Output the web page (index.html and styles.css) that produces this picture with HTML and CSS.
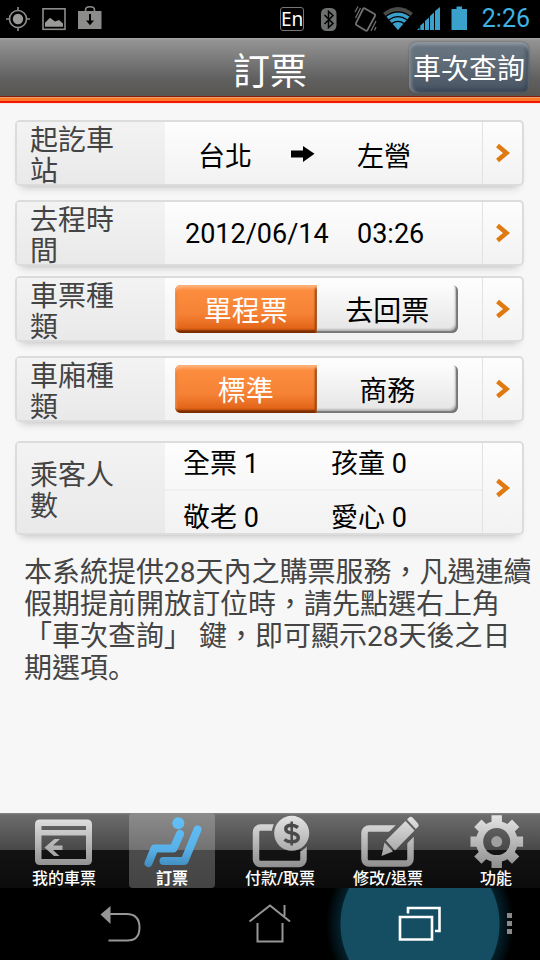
FILE: index.html
```html
<!DOCTYPE html>
<html lang="zh-Hant">
<head>
<meta charset="utf-8">
<meta name="viewport" content="width=device-width, initial-scale=1">
<title>訂票</title>
<link rel="stylesheet" href="styles.css">
</head>
<body>
<div class="status">
  <svg class="status-left" width="110" height="38" viewBox="0 0 110 38" aria-hidden="true">
    <g fill="none" stroke="#8c8c8a" stroke-width="1.6">
      <circle cx="18" cy="19" r="8.5"/>
      <path d="M18 7v4M18 27v4M6 19h4M26 19h4"/>
      <rect x="43" y="8.800" width="22" height="20.500"/>
      <path d="M85.500 12v-2q0-3.200 4.500-3.200t4.500 3.200v2"/>
    </g>
    <circle cx="18" cy="19" r="5.200" fill="#9a9a98"/>
    <path fill="#9a9a98" d="M45 26.800v-4l5-5 5 3.800 4-1.500 4 3.500v3.200z"/>
    <path fill="#8c8c8a" d="M78 11h23.500v18H78z"/>
    <path fill="#000" d="M89 14h2v6.500h3l-4 4.800-4-4.800h3z"/>
  </svg>
  <div class="status-right">
    <span class="lang">En</span>
    <svg width="166" height="38" viewBox="310 0 166 38" aria-hidden="true">
      <rect x="321" y="8" width="15.500" height="23" rx="5.500" fill="#6c706e"/>
      <path d="M324.500 15l8.500 8.500-4.500 4V11.500l4.500 4-8.500 8.500" fill="none" stroke="#000" stroke-width="1.500"/>
      <g fill="none" stroke="#70706e" stroke-width="1.300">
        <path d="M365 8.500l9.500 5.500q1 .8.500 2l-7.500 14q-.8 1.200-2 .5l-9-5.500q-1-.8-.5-2l7-14q.8-1.200 2-.5z" stroke-width="1.800"/>
        <path d="M355.500 18l5-10M355 12l3-5.500M371 31l5-10M374.500 30.500l1.500-3.500"/>
      </g>
      <path fill="#4a4a48" d="M383 13q15-12 30 0l-15 17z"/>
      <path fill="#3aa0cc" d="M386.500 16.500q11.500-8 23 0L398 30z"/>
      <g fill="none" stroke="#000" stroke-width="1.300">
        <path d="M386 16.200q12-8.500 24 0M389 19.800q9-6.200 18 0M392 23.400q6-4 12 0"/>
      </g>
      <path fill="#3aa0cc" d="M417 30l2.500-2.500V30zM420.300 30v-4.500l3.700-3V30zM425 30v-9l4-3.500V30zM430 30V16l4-3.500V30zM435 30V11l5-4v23z"/>
      <path fill="#3aa0cc" d="M456.500 6.500h5.500V9h5v21h-15.500V9h5z"/>
    </svg>
    <time class="clock">2:26</time>
  </div>
</div>

<header class="header">
  <h1 class="title">訂票</h1>
  <button class="query" type="button">車次查詢</button>
</header>
<div class="stripe"></div>

<main class="main">
  <div class="group">
    <section class="card">
      <h2 class="label">起訖車站</h2>
      <div class="value pair route">
        <span class="from">台北
          <svg width="26" height="18" viewBox="0 0 26 18" aria-hidden="true"><path d="M1 5.500h12V1l11.500 7.800L13 17v-4.500H1z"/></svg>
        </span>
        <span>左營</span>
      </div>
      <button class="more" type="button" aria-label="選擇車站"><svg width="16" height="20" viewBox="0 0 16 20"><path d="M2.500 2.500l9 7.500-9 7.500"/></svg></button>
    </section>
    <section class="card">
      <h2 class="label">去程時間</h2>
      <div class="value pair"><span>2012/06/14</span><span>03:26</span></div>
      <button class="more" type="button" aria-label="選擇時間"><svg width="16" height="20" viewBox="0 0 16 20"><path d="M2.500 2.500l9 7.500-9 7.500"/></svg></button>
    </section>
  </div>
  <div class="group">
    <section class="card">
      <h2 class="label">車票種類</h2>
      <div class="value switch">
        <button class="option selected" type="button" aria-pressed="true">單程票</button>
        <button class="option" type="button" aria-pressed="false">去回票</button>
      </div>
      <button class="more" type="button" aria-label="選擇車票"><svg width="16" height="20" viewBox="0 0 16 20"><path d="M2.500 2.500l9 7.500-9 7.500"/></svg></button>
    </section>
    <section class="card">
      <h2 class="label">車廂種類</h2>
      <div class="value switch">
        <button class="option selected" type="button" aria-pressed="true">標準</button>
        <button class="option" type="button" aria-pressed="false">商務</button>
      </div>
      <button class="more" type="button" aria-label="選擇車廂"><svg width="16" height="20" viewBox="0 0 16 20"><path d="M2.500 2.500l9 7.500-9 7.500"/></svg></button>
    </section>
  </div>
  <div class="group last">
    <section class="card tall">
      <h2 class="label">乘客人數</h2>
      <div class="value passengers">
        <div class="line"><span>全票 1</span><span>孩童 0</span></div>
        <div class="line"><span>敬老 0</span><span>愛心 0</span></div>
      </div>
      <button class="more" type="button" aria-label="選擇人數"><svg width="16" height="20" viewBox="0 0 16 20"><path d="M2.500 2.500l9 7.500-9 7.500"/></svg></button>
    </section>
  </div>
  <p class="note">本系統提供28天內之購票服務，凡遇連續假期提前開放訂位時，請先點選右上角「車次查詢」 鍵，即可顯示28天後之日期選項<span class="stop" lang="zh-Hans">。</span></p>
</main>

<nav class="tabs">
  <a class="tab" href="#tickets">
    <svg width="86" height="56" viewBox="0 0 86 56" aria-hidden="true">
      <defs>
        <linearGradient id="metal" gradientUnits="userSpaceOnUse" x1="0" y1="4" x2="0" y2="56"><stop offset="0" stop-color="#e2e2e2"/><stop offset="1" stop-color="#8c8c8c"/></linearGradient>
        <linearGradient id="sky" gradientUnits="userSpaceOnUse" x1="0" y1="4" x2="0" y2="56"><stop offset="0" stop-color="#62c0f8"/><stop offset=".6" stop-color="#58b2ea"/><stop offset="1" stop-color="#3f88b8"/></linearGradient>
      </defs>
      <path fill="url(#metal)" fill-rule="evenodd" d="M19 6.500h47q5 0 5 5v35.500q0 5-5 5H19q-5 0-5-5V11.500q0-5 5-5zM20.500 13v4h44.500v-4zM20.500 22.500V46h44.500V22.500z"/>
      <path fill="url(#metal)" d="M23.500 34.500l10-8.500h5.500l-7 6.500h9.500v4.500H32l6.500 6H33z"/>
    </svg>
    <span>我的車票</span>
  </a>
  <a class="tab active" href="#booking" aria-current="page">
    <svg width="86" height="56" viewBox="0 0 86 56" aria-hidden="true">
      <circle cx="49.300" cy="10.300" r="6" fill="url(#sky)"/>
      <path fill="none" stroke="url(#sky)" stroke-width="8" stroke-linecap="round" stroke-linejoin="round" d="M51 21l-6.500 14.500H25.500L19.500 50M68.500 16.500L55.500 48H34.500"/>
    </svg>
    <span>訂票</span>
  </a>
  <a class="tab" href="#pay">
    <svg width="86" height="56" viewBox="0 0 86 56" aria-hidden="true">
      <mask id="coin-gap"><path fill="#fff" d="M0 0h86v56H0z"/><circle cx="54.700" cy="20.300" r="20"/></mask>
      <rect x="19" y="14.500" width="47.500" height="36.500" rx="4.500" fill="none" stroke="url(#metal)" stroke-width="6.500" mask="url(#coin-gap)"/>
      <circle cx="54.700" cy="20.300" r="17.500" fill="url(#metal)"/>
      <path fill="none" stroke="#4a4a4a" stroke-width="3.500" d="M61 14.500q-3-2.300-6.500-2.300-5.700 0-5.700 3.800 0 3.300 5.700 4 6.800 1 6.800 4.800 0 4-6.800 4-4.200 0-7-2.300"/>
      <path stroke="#4a4a4a" stroke-width="2.500" d="M54.700 8.500v24"/>
    </svg>
    <span>付款/取票</span>
  </a>
  <a class="tab" href="#change">
    <svg width="86" height="56" viewBox="0 0 86 56" aria-hidden="true">
      <mask id="pencil-gap"><path fill="#fff" d="M0 0h86v56H0z"/><path stroke="#000" stroke-width="5" d="M36 43l4-17L64 3l11 11-25 25z"/></mask>
      <rect x="19.500" y="15.500" width="46" height="35" rx="4.500" fill="none" stroke="url(#metal)" stroke-width="6.500" mask="url(#pencil-gap)"/>
      <g fill="url(#metal)">
        <path d="M41 27.500L60.500 8l9 9.500L50 37.500zM39.500 29.500l8.500 9L36.500 43zM62 6.500l2-2q2-1.500 4 .5l5 5.500q1.500 2 0 3.500l-2.200 2z"/>
      </g>
    </svg>
    <span>修改/退票</span>
  </a>
  <a class="tab" href="#settings">
    <svg width="86" height="56" viewBox="0 0 86 56" aria-hidden="true">
      <mask id="hub"><path fill="#fff" d="M0 0h86v56H0z"/><circle cx="43.700" cy="28.600" r="13.500"/></mask>
      <path fill="url(#metal)" mask="url(#hub)" d="M38.500 2.300h10.400v6.500q3 .8 5.500 2.300l4.600-4.500 7.300 7.300-4.500 4.600q1.500 2.400 2.200 4.900h6.100v10.400H64q-.7 2.700-2.200 5.100l4.500 4.600-7.300 7.300-4.600-4.500q-2.500 1.500-5.500 2.200V55H38.500v-6.500q-2.800-.7-5.400-2.200l-4.600 4.500-7.300-7.300 4.500-4.600q-1.500-2.400-2.200-5.100h-6V23.400h6q.7-2.500 2.200-4.900l-4.500-4.600 7.300-7.300 4.600 4.500q2.500-1.500 5.400-2.300z"/>
      <circle cx="43.700" cy="28.600" r="5.500" fill="#a0a0a0"/>
    </svg>
    <span>功能</span>
  </a>
</nav>

<div class="system">
  <button class="key" type="button" aria-label="返回">
    <svg width="44" height="40" viewBox="0 0 44 40"><path d="M12 10h16.500q13 0 13 13.500T28.500 36.500H10.500" fill="none" stroke="#969696" stroke-width="2"/><path d="M2.500 10.500L12.500 2v18z" fill="#969696"/></svg>
  </button>
  <button class="key" type="button" aria-label="主畫面">
    <svg width="46" height="42" viewBox="0 0 46 42"><path d="M2.500 18.500L23 2.500l20 16M37.500 2v11M10.500 20v18.500h25V20" fill="none" stroke="#969696" stroke-width="2"/></svg>
  </button>
  <button class="key recent" type="button" aria-label="最近使用">
    <svg width="46" height="38" viewBox="0 0 46 38"><path d="M3 12h32v22.500H3zM11 8.500V3h31.500v23H38" fill="none" stroke="#fff" stroke-width="2.600"/></svg>
  </button>
  <button class="key" type="button" aria-label="選單">
    <svg width="6" height="22" viewBox="0 0 6 22"><path fill="#8a8a8a" d="M0 0h5v5H0zM0 8h5v5H0zM0 16h5v5H0z"/></svg>
  </button>
</div>
</body>
</html>
```
FILE: styles.css
```css
* {
  box-sizing: border-box;
}

body {
  margin: 0;
  min-height: 100vh;
  display: flex;
  flex-direction: column;
  background: #f7f7f7;
  color: #000;
  font-family: Roboto, "Noto Sans CJK TC", sans-serif;
  text-spacing-trim: space-all;
}

button {
  margin: 0;
  padding: 0;
  border: 0;
  background: none;
  color: inherit;
  font: inherit;
}

svg {
  display: block;
  flex: none;
}

.status {
  display: flex;
  justify-content: space-between;
  height: 38px;
  background: #000;
}

.status-right {
  display: flex;
  align-items: center;
  padding-right: 10px;
}

.lang {
  width: 24px;
  height: 24px;
  margin-right: 6px;
  border: 1px solid #777;
  border-radius: 3px;
  color: #fff;
  font: 19px/22px "Noto Sans", sans-serif;
  text-align: center;
}

.clock {
  width: 54px;
  color: #3fb2e4;
  font-size: 25px;
  line-height: 40px;
  text-align: right;
}

.header {
  display: grid;
  grid-template-columns: 1fr auto 1fr;
  align-items: center;
  height: 58px;
  padding-right: 11px;
  background: linear-gradient(#aaa 0, #949494 2px, #606060 70%, #585652);
}

.stripe {
  height: 8px;
  background: linear-gradient(#8a1c08 1px, #e8a070 1px 2px, #ff7a28 2px 5px, #f01808 5px 7px, #ffe4de 7px);
}

.title {
  grid-column: 2;
  margin: 0;
  padding: 12px 0 0 11px;
  color: #fff;
  font-size: 37px;
  font-weight: 400;
  line-height: 46px;
}

.query {
  justify-self: end;
  width: 120px;
  height: 51px;
  padding-top: 4px;
  border-radius: 8px;
  background: linear-gradient(#6c7883, #5c6874 50%, #465260);
  box-shadow: inset 0 3px 3px #8d969f, inset 3px 0 3px #747d86, inset -2px -3px 4px #364250, 0 0 2px #555;
  color: #fff;
  font-size: 28px;
  line-height: 47px;
}

.main {
  flex: 1;
  padding: 16px 8px 16px 15px;
}

.group {
  display: grid;
  gap: 14px;
  margin: 0 8px 10px 0;
}

.last {
  margin-top: 19px;
}

.card {
  display: flex;
  height: 66px;
  border: 2px solid #dcdcdc;
  border-radius: 5px;
  background: linear-gradient(#fdfdfd, #f2f2f2);
  box-shadow: 0 7px 8px -6px #bbb;
}

.tall {
  height: 94px;
}

.label {
  display: flex;
  align-items: center;
  width: 148px;
  margin: 0;
  padding: 6px 45px 0 13px;
  background: linear-gradient(#f3f3f3, #e9e9e9);
  color: #444;
  font-size: 28px;
  font-weight: 400;
  line-height: 31px;
}

.value {
  flex: 1;
  font-size: 27px;
}

.pair {
  display: grid;
  grid-template-columns: 172px 1fr;
  align-items: center;
  padding: 2px 0 0 20px;
}

.from {
  display: flex;
  align-items: center;
  gap: 38px;
  padding-left: 13px;
}

.switch {
  display: flex;
  padding: 7px 24px 7px 10px;
  font-size: 28px;
}

.option {
  flex: 1;
  border-radius: 0 6px 6px 0;
  background: linear-gradient(#fcfcfc, #e4e4e4);
  box-shadow: inset -2px -2px 1px #777, inset -3px -4px 2px #bbb;
}

.selected {
  border-radius: 6px 0 0 6px;
  background: linear-gradient(#ff9040, #f58236 60%, #dc5c10);
  box-shadow: inset 0 3px 3px #ffb27c, inset -2px -3px 2px #7a2c00, inset 2px 0 2px #e87830;
  color: #fff;
}

.passengers {
  display: grid;
  grid-template-rows: 46px 44px;
}

.line {
  display: grid;
  grid-template-columns: 148px 1fr;
  padding-left: 18px;
  line-height: 42px;
}

.line + .line {
  padding-top: 6px;
  border-top: 2px solid #f0f0f0;
}

.more {
  display: grid;
  place-items: center;
  width: 40px;
  border-left: 1px solid #e2e2e2;
}

.more path {
  fill: none;
  stroke: #e07a10;
  stroke-width: 4.5;
}

.note {
  margin: 22px 0 0 9px;
  color: #444;
  font-size: 28px;
  line-height: 32px;
}

.stop {
  font-family: Roboto, "Noto Sans CJK SC", sans-serif;
}

.tabs {
  display: grid;
  grid-template-columns: repeat(5, 1fr);
  gap: 22px;
  height: 75px;
  padding: 0 1px 0 21px;
  background: linear-gradient(#888 0, #6c6c6c 2px, #484848 37px, #131313 37px, #0c0c0c);
}

.tab {
  display: flex;
  flex-direction: column;
  align-items: center;
  border-radius: 4px;
  color: #fff;
  font-size: 16px;
  font-weight: 500;
  line-height: 19px;
  text-decoration: none;
  white-space: nowrap;
}

.active {
  background: linear-gradient(#8c8c8c, #727272 37px, #4c4c4c 37px, #444);
  font-weight: 700;
}

.system {
  display: grid;
  grid-template-columns: 1fr 1fr 1fr 30px;
  height: 72px;
  padding: 0 15px 0 45px;
  overflow: hidden;
  background: #000;
}

.key {
  position: relative;
  display: grid;
  place-items: center;
}

.recent::before {
  content: "";
  position: absolute;
  inset: 0 -20px;
  background: radial-gradient(circle, #154e62 79px, #04202a 80px, #000 94px);
}

.recent svg,
.recent + .key svg {
  position: relative;
}
```
